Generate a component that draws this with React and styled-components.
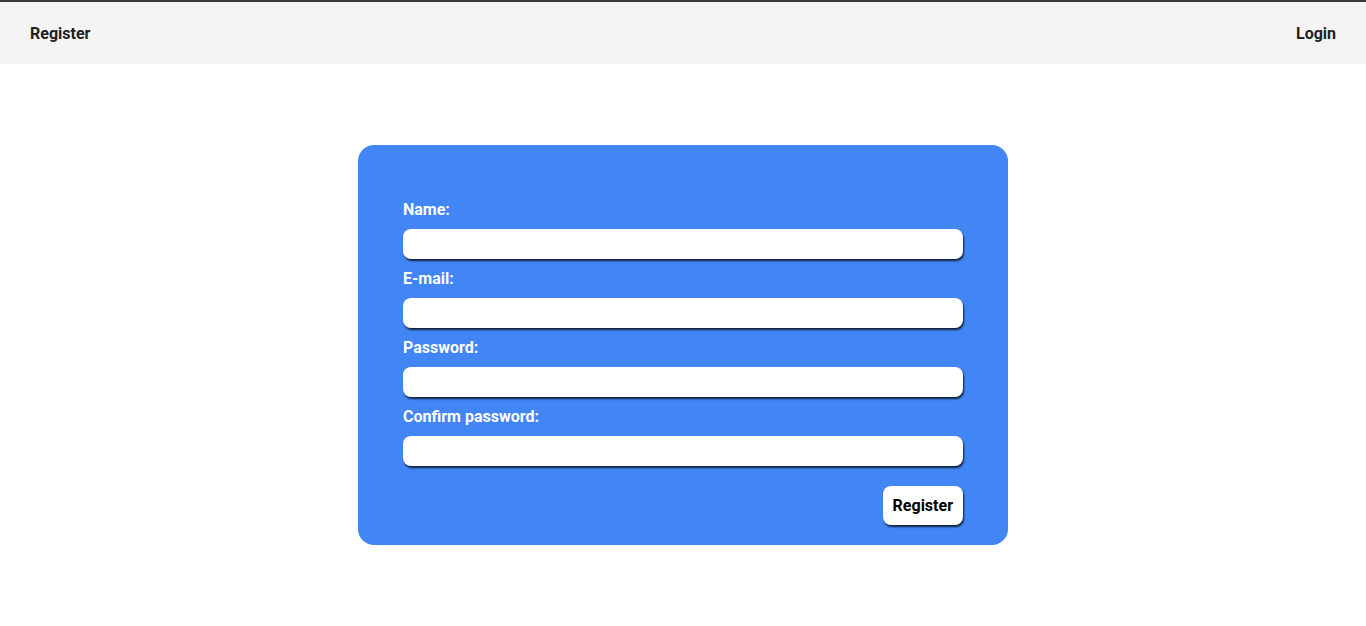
import React from 'react';
import styled, {createGlobalStyle} from 'styled-components';

const GlobalStyle = createGlobalStyle`
  body {
    margin: 0;
    font-family: Roboto, "Liberation Sans", sans-serif;
    background: #fff;
    color: #212121;
  }
`;

const Nav = styled.nav`
  height: 62px;
  border-top: 2px solid #3a3a3a;
  background-color: #f4f4f4;
  display: flex;
  justify-content: space-between;
  align-items: center;
  padding: 0 30px;
`;

const NavLink = styled.a`
  font-weight: 700;
  font-size: 16px;
  color: #212121;
  text-decoration: none;
  cursor: pointer;
`;

//Blue card holding the form
const Card = styled.form`
  width: 650px;
  box-sizing: border-box;
  margin: 81px auto 0;
  padding: 55px 45px 20px;
  background-color: #4285f4;
  border-radius: 16px;
  display: flex;
  flex-direction: column;
`;

const Label = styled.label`
  color: #fff;
  font-weight: 700;
  font-size: 16px;
  line-height: 19px;
  margin-bottom: 10px;
`;

const Input = styled.input`
  height: 30px;
  box-sizing: border-box;
  border: none;
  border-radius: 8px;
  background: #fff;
  box-shadow: 1px 2px 2px rgba(0, 0, 0, 0.75);
  margin-bottom: 10px;
  padding: 0 10px;
  font-size: 16px;
  outline: none;
`;

const Actions = styled.div`
  display: flex;
  justify-content: flex-end;
  margin-top: 10px;
`;

const Button = styled.button`
  height: 39px;
  padding: 0 10px;
  border: none;
  border-radius: 8px;
  background: #fff;
  color: #000;
  font-family: Roboto, "Liberation Sans", sans-serif;
  font-weight: 700;
  font-size: 16px;
  box-shadow: 1px 2px 2px rgba(0, 0, 0, 0.75);
  cursor: pointer;
`;

const fields = ['Name:', 'E-mail:', 'Password:', 'Confirm password:'];

export default function App() {
  return (
    <>
      <GlobalStyle />
      <Nav>
        <NavLink>Register</NavLink>
        <NavLink>Login</NavLink>
      </Nav>
      <Card onSubmit={e => e.preventDefault()}>
        {fields.map(f => (
          <React.Fragment key={f}>
            <Label>{f}</Label>
            <Input type={f.startsWith('Pass') || f.startsWith('Conf') ? 'password' : 'text'} />
          </React.Fragment>
        ))}
        <Actions>
          <Button type="submit">Register</Button>
        </Actions>
      </Card>
    </>
  );
}
